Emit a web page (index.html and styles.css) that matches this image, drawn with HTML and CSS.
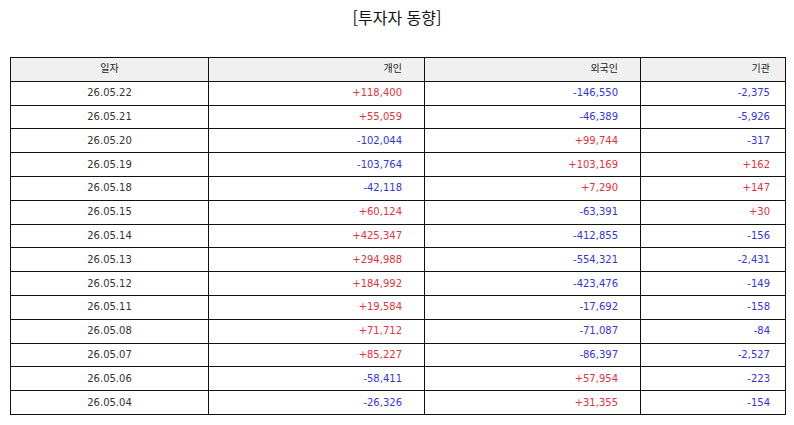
FILE: index.html
```html
<!DOCTYPE html>
<html lang="ko">
<head>
<meta charset="utf-8">
<link rel="stylesheet" href="styles.css">
</head>
<body>
<h1 class="title">[투자자 동향]</h1>
<table class="flow">
  <colgroup>
    <col class="c-date"><col class="c-num"><col class="c-num"><col class="c-inst">
  </colgroup>
  <thead>
    <tr><th class="date">일자</th><th class="num">개인</th><th class="num">외국인</th><th class="inst">기관</th></tr>
  </thead>
  <tbody>
    <tr><td class="date">26.05.22</td><td class="num up">+118,400</td><td class="num down">-146,550</td><td class="inst down">-2,375</td></tr>
    <tr><td class="date">26.05.21</td><td class="num up">+55,059</td><td class="num down">-46,389</td><td class="inst down">-5,926</td></tr>
    <tr><td class="date">26.05.20</td><td class="num down">-102,044</td><td class="num up">+99,744</td><td class="inst down">-317</td></tr>
    <tr><td class="date">26.05.19</td><td class="num down">-103,764</td><td class="num up">+103,169</td><td class="inst up">+162</td></tr>
    <tr><td class="date">26.05.18</td><td class="num down">-42,118</td><td class="num up">+7,290</td><td class="inst up">+147</td></tr>
    <tr><td class="date">26.05.15</td><td class="num up">+60,124</td><td class="num down">-63,391</td><td class="inst up">+30</td></tr>
    <tr><td class="date">26.05.14</td><td class="num up">+425,347</td><td class="num down">-412,855</td><td class="inst down">-156</td></tr>
    <tr><td class="date">26.05.13</td><td class="num up">+294,988</td><td class="num down">-554,321</td><td class="inst down">-2,431</td></tr>
    <tr><td class="date">26.05.12</td><td class="num up">+184,992</td><td class="num down">-423,476</td><td class="inst down">-149</td></tr>
    <tr><td class="date">26.05.11</td><td class="num up">+19,584</td><td class="num down">-17,692</td><td class="inst down">-158</td></tr>
    <tr><td class="date">26.05.08</td><td class="num up">+71,712</td><td class="num down">-71,087</td><td class="inst down">-84</td></tr>
    <tr><td class="date">26.05.07</td><td class="num up">+85,227</td><td class="num down">-86,397</td><td class="inst down">-2,527</td></tr>
    <tr><td class="date">26.05.06</td><td class="num down">-58,411</td><td class="num up">+57,954</td><td class="inst down">-223</td></tr>
    <tr><td class="date">26.05.04</td><td class="num down">-26,326</td><td class="num up">+31,355</td><td class="inst down">-154</td></tr>
  </tbody>
</table>
</body>
</html>
```
FILE: styles.css
```css
html, body {
  margin: 0;
  padding: 0;
  background: #fff;
}
body {
  font-family: "DejaVu Sans", "Noto Sans CJK KR", sans-serif;
  color: #333;
}
.title {
  margin: 0;
  padding-top: 5px;
  height: 57px;
  box-sizing: border-box;
  text-align: center;
  font-family: "Noto Sans CJK KR", sans-serif;
  font-size: 16px;
  font-weight: 400;
  line-height: 24px;
  color: #111;
}
.flow {
  margin-left: 10px;
  border-collapse: collapse;
  table-layout: fixed;
  width: 775px;
  font-size: 10px;
}
.c-date { width: 198px; }
.c-num { width: 216px; }
.c-inst { width: 145px; }
.flow th, .flow td {
  border: 1.5px solid #111;
  height: 23.8px;
  padding: 0;
  box-sizing: border-box;
  font-weight: 400;
  line-height: 14px;
  white-space: nowrap;
}
.flow th {
  background: #f0f0f0;
  color: #222;
}
.flow .date { text-align: center; }
.flow .num { text-align: right; padding-right: 22px; }
.flow .inst { text-align: right; padding-right: 15px; }
.flow .up { color: #e4323c; }
.flow .down { color: #3434dc; }
```
